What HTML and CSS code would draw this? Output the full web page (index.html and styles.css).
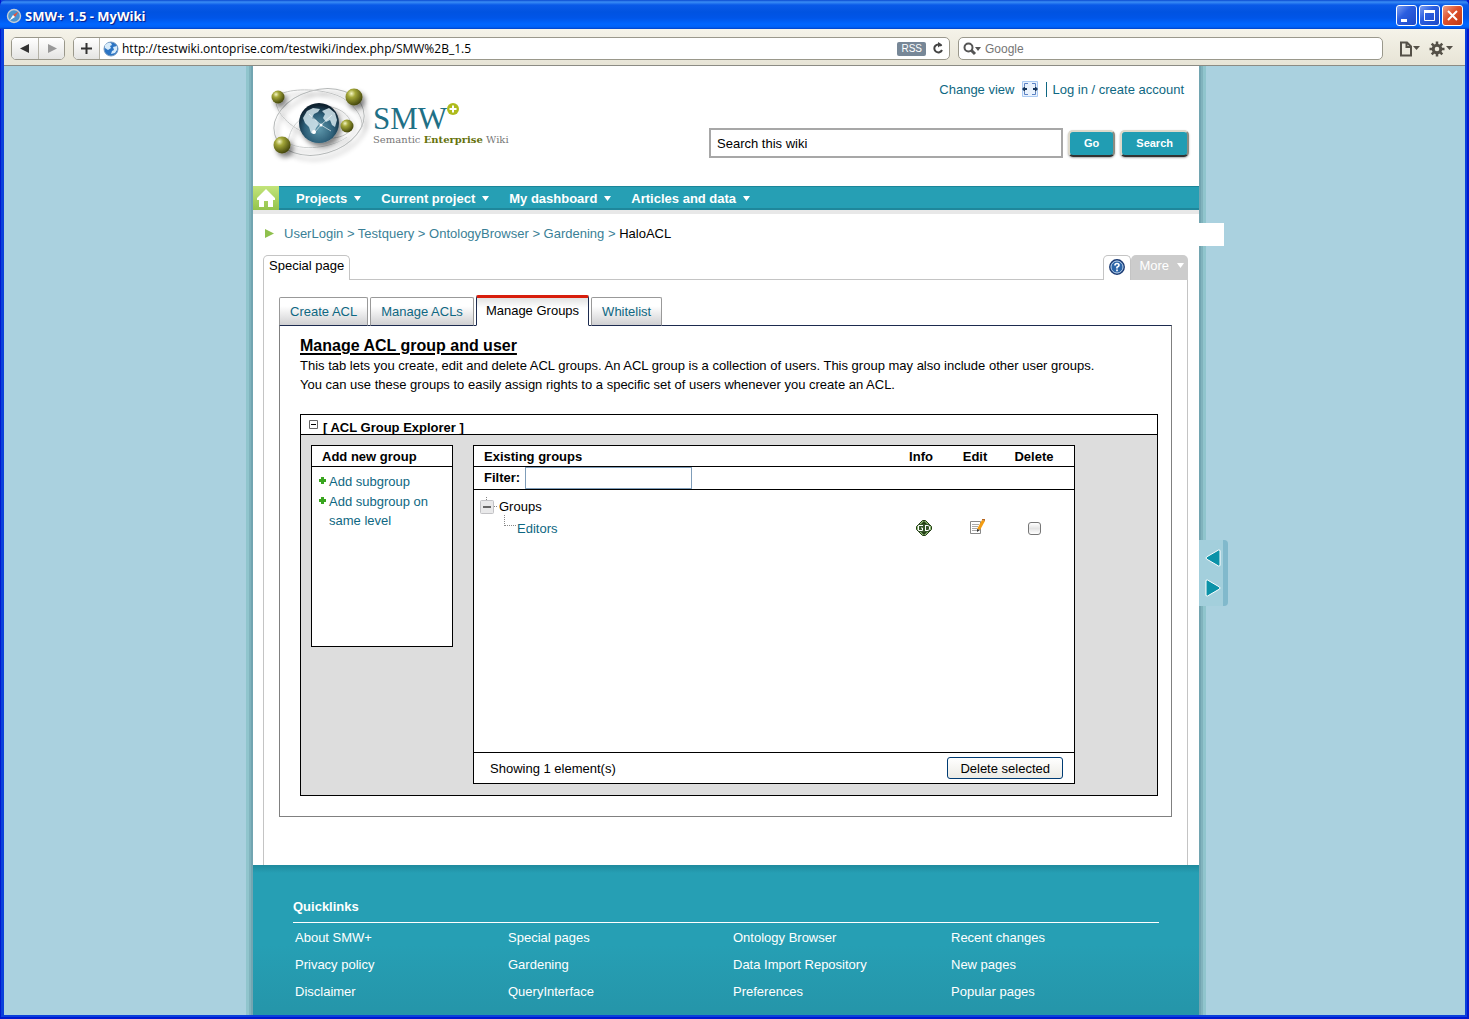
FILE: index.html
```
<!DOCTYPE html>
<html lang="en">
<head>
    <meta charset="UTF-8">
    <meta name="viewport" content="width=device-width, initial-scale=1.0">
    <title>SMW+ 1.5 - MyWiki</title>
    <link rel="stylesheet" href="styles.css">
</head>
<body>
    <div class="window">
        <div class="titlebar">
            <svg width="16" height="16" viewBox="0 0 16 16">
                <circle cx="8" cy="8" r="6.5" fill="#4a93cf" stroke="#c4cdd6" stroke-width="1.4"/>
                <path d="M12.500 3.500L9 9L7 7z" fill="#e6553c"/>
                <path d="M3.500 12.500L7 7L9 9z" fill="#fff"/>
            </svg>
            <span class="window-title">SMW+ 1.5 - MyWiki</span>
            <button class="win-btn" aria-label="Minimize"><svg width="19" height="19"><path d="M4 13h6v3H4z" fill="#fff"/></svg></button>
            <button class="win-btn" aria-label="Maximize"><svg width="19" height="19"><path d="M4.500 5v9.500h10V5" fill="none" stroke="#fff"/><path d="M4 4h11v3H4z" fill="#fff"/></svg></button>
            <button class="win-btn close" aria-label="Close"><svg width="19" height="19"><path d="M5 5l9 9M14 5l-9 9" stroke="#fff" stroke-width="2"/></svg></button>
        </div>
        <div class="toolbar">
            <div class="history">
                <button aria-label="Back"><svg width="10" height="10"><path d="M9 0v9L0 4.500z" fill="#333"/></svg></button>
                <button aria-label="Forward"><svg width="10" height="10"><path d="M1 0v9l9-4.500z" fill="#999"/></svg></button>
            </div>
            <div class="address">
                <button class="add-bookmark" aria-label="Add bookmark"><svg width="11" height="11"><path d="M4.500 0h2v4.500H11v2H6.500V11h-2V6.500H0v-2h4.500z" fill="#333"/></svg></button>
                <svg width="16" height="16" viewBox="0 0 16 16">
                    <circle cx="8" cy="8" r="7" fill="#2b74c4" stroke="#7a9cc0"/>
                    <path d="M2 4Q5 1 8 2L9 4L7 5L8 7L5 9L2 7zM10 6L14 5L14 9L12 12L8 13L9 10L11 9z" fill="#d8ecfb"/>
                </svg>
                <input type="text" class="url" aria-label="Address" value="http://testwiki.ontoprise.com/testwiki/index.php/SMW%2B_1.5">
                <span class="rss">RSS</span>
                <button class="plain" aria-label="Reload"><svg width="12" height="13"><path d="M9.500 4A4 4 0 1 0 10 8" fill="none" stroke="#444" stroke-width="2"/><path d="M6 0l4 2.500L6 5.500z" fill="#444"/></svg></button>
            </div>
            <div class="google">
                <svg width="19" height="14"><circle cx="5.500" cy="5.500" r="4" fill="none" stroke="#555" stroke-width="2"/><path d="M8 8l4 4" stroke="#555" stroke-width="3"/><path d="M12 5h6l-3 4z" fill="#555"/></svg>
                <input type="text" aria-label="Google search" placeholder="Google">
            </div>
            <button class="plain menu-btn" aria-label="Page menu"><svg width="22" height="16"><path d="M2 1.500h6l4 4v9H2zM7.500 1.500V6H12" fill="none" stroke="#555148" stroke-width="2"/><path d="M14 5h7l-3.500 4z" fill="#555148"/></svg></button>
            <button class="plain menu-btn" aria-label="Settings menu"><svg width="25" height="16"><circle cx="8" cy="8" r="3.800" fill="none" stroke="#555148" stroke-width="3"/><path d="M8 .5v3M8 12.500v3M.5 8h3M12.500 8h3M2.700 2.700l2 2M11.300 11.300l2 2M2.700 13.300l2-2M11.300 4.700l2-2" stroke="#555148" stroke-width="2.500"/><path d="M17 5h7l-3.500 4z" fill="#555148"/></svg></button>
        </div>

        <div class="viewport">
            <div class="page">
                <header class="header">
                    <a href="#" class="logo" aria-label="SMW+ home">
                        <svg width="102" height="88" viewBox="0 -2 102 88">
                            <defs>
                                <radialGradient id="ball" cx="35%" cy="30%" r="75%">
                                    <stop offset="0" stop-color="#f4f5c4"/>
                                    <stop offset=".3" stop-color="#a5a83a"/>
                                    <stop offset="1" stop-color="#3c3f08"/>
                                </radialGradient>
                                <radialGradient id="globe" cx="50%" cy="65%" r="60%">
                                    <stop offset="0" stop-color="#5f98ac"/>
                                    <stop offset=".6" stop-color="#2d5f78"/>
                                    <stop offset="1" stop-color="#0e202e"/>
                                </radialGradient>
                                <filter id="shade" x="-30%" y="-30%" width="160%" height="160%">
                                    <feDropShadow dx="3" dy="4" stdDeviation="2.500" flood-color="#000" flood-opacity=".45"/>
                                </filter>
                            </defs>
                            <g fill="none" filter="url(#shade)">
                                <ellipse cx="48" cy="39" rx="46" ry="32" stroke="#b5b8b8" transform="rotate(-16 48 39)"/>
                                <path d="M5 20C-1 6 44 2 70 14C84 22 92 34 91 44" stroke="#c2c4c4"/>
                                <path d="M5 20C8 36 26 48 44 54C58 58 84 54 80 40C78 32 70 26 60 24" stroke="#c2c4c4"/>
                                <path d="M17 60C18 50 22 42 30 36M17 60C36 70 66 62 76 54" stroke="#cfd1d1"/>
                            </g>
                            <g filter="url(#shade)">
                                <circle cx="48" cy="40" r="20" fill="url(#globe)"/>
                                <circle cx="7" cy="14" r="6.500" fill="url(#ball)"/>
                                <circle cx="83" cy="14" r="8.500" fill="url(#ball)"/>
                                <circle cx="11" cy="62" r="8.500" fill="url(#ball)"/>
                            </g>
                            <g transform="translate(0 1)">
                                <path d="M32 34L36 27L42 24L49 25L47 28L43 30L41 34L45 36L48 40L45 44L43 50L40 49L38 43L34 39zM51 27L58 24L64 29L66 36L64 43L61 41L59 36L55 38L52 34L54 30z" fill="#d5e8ee" opacity=".85"/>
                                <path d="M38 30L50 41L61 31M50 41L43 49M50 41L60 47" stroke="#fff" fill="none" opacity=".6"/>
                                <circle cx="50" cy="41" r="1.500" fill="#fff"/>
                                <circle cx="43" cy="48" r="2" fill="#fff"/>
                            </g>
                            <circle cx="76" cy="43" r="6.500" fill="url(#ball)"/>
                        </svg>
                        <span class="logo-text">
                            <span class="logo-name">SMW<svg width="12" height="12" class="logo-plus"><circle cx="6" cy="6" r="6" fill="#aebb1c"/><path d="M6 2.500v7M2.500 6h7" stroke="#fff" stroke-width="2"/></svg></span>
                            <span class="logo-sub">Semantic <b>Enterprise</b> Wiki</span>
                        </span>
                    </a>
                    <div class="header-right">
                        <div class="user-links">
                            <a href="#">Change view</a>
                            <svg width="16" height="16"><path d="M.5.500h15v15H.5z" fill="#e9f2fd" stroke="#a9c9f2"/><path d="M2.500 5V2.500H6M10 2.500h3.500V5M2.500 11v2.500H6M10 13.500h3.500V11" fill="none" stroke="#5b82c4"/><path d="M0 8l3-3v2h2v2H3v2zM16 8l-3-3v2h-2v2h2v2z" fill="#17365d"/></svg>
                            <a href="#" class="login">Log in / create account</a>
                        </div>
                        <form class="wiki-search">
                            <input type="text" aria-label="Search this wiki" value="Search this wiki">
                            <button type="button">Go</button>
                            <button type="button">Search</button>
                        </form>
                    </div>
                </header>
                <nav class="main-nav">
                    <a href="#" class="home" aria-label="Home"><svg width="20" height="19"><path d="M10 0L19 9V11H17V18H12V12H8V18H3V11H1V9z" fill="#fff"/></svg></a>
                    <button>Projects <svg width="7" height="5"><path d="M0 0h7L3.500 5z"/></svg></button>
                    <button>Current project <svg width="7" height="5"><path d="M0 0h7L3.500 5z"/></svg></button>
                    <button>My dashboard <svg width="7" height="5"><path d="M0 0h7L3.500 5z"/></svg></button>
                    <button>Articles and data <svg width="7" height="5"><path d="M0 0h7L3.500 5z"/></svg></button>
                </nav>
                <div class="breadcrumb">
                    <svg width="9" height="9"><path d="M0 0l9 4.500L0 9z" fill="#8fc04d"/></svg>
                    <span><a href="#">UserLogin</a> &gt; <a href="#">Testquery</a> &gt; <a href="#">OntologyBrowser</a> &gt; <a href="#">Gardening</a> &gt; <span class="current">HaloACL</span></span>
                </div>
                <div class="page-tabs">
                    <a href="#" class="page-tab">Special page</a>
                    <a href="#" class="help-tab" aria-label="Help"><svg width="16" height="16"><circle cx="8" cy="8" r="7.200" fill="#2c65a8" stroke="#1b3a72" stroke-width="1.500"/><circle cx="8" cy="8" r="6" fill="none" stroke="#b9cfe8"/><path d="M6 6.500Q6 4.500 8 4.500T10 6.300Q10 7.300 8 8.300V9.500M8 10.500v1.800" fill="none" stroke="#fff" stroke-width="1.700"/></svg></a>
                    <button class="more-tab">More <svg width="7" height="5"><path d="M0 0h7L3.500 5z"/></svg></button>
                </div>
                <main class="content">
                    <div class="acl-tabs">
                        <a href="#">Create ACL</a>
                        <a href="#">Manage ACLs</a>
                        <a href="#" class="active">Manage Groups</a>
                        <a href="#">Whitelist</a>
                    </div>
                    <div class="acl-panel">
                        <h1>Manage ACL group and user</h1>
                        <p>This tab lets you create, edit and delete ACL groups. An ACL group is a collection of users. This group may also include other user groups.<br>
                        You can use these groups to easily assign rights to a specific set of users whenever you create an ACL.</p>
                        <div class="explorer">
                            <div class="explorer-head">
                                <svg width="9" height="9"><path d="M.5.500h8v8h-8z" fill="#fff" stroke="#666"/><path d="M2 4.500h5" stroke="#000"/></svg>
                                <span>[ ACL Group Explorer ]</span>
                            </div>
                            <div class="explorer-body">
                                <div class="add-box">
                                    <h2>Add new group</h2>
                                    <a href="#"><svg width="7" height="7"><path d="M2 0h3v2h2v3H5v2H2V5H0V2h2z" fill="#39a51f"/></svg>Add subgroup</a>
                                    <a href="#"><svg width="7" height="7"><path d="M2 0h3v2h2v3H5v2H2V5H0V2h2z" fill="#39a51f"/></svg>Add subgroup on same level</a>
                                </div>
                                <div class="group-box">
                                    <div class="group-list">
                                        <table>
                                            <thead>
                                                <tr class="line">
                                                    <th class="name">Existing groups</th>
                                                    <th class="icon-col">Info</th>
                                                    <th class="icon-col">Edit</th>
                                                    <th class="delete-col">Delete</th>
                                                </tr>
                                                <tr class="line filter">
                                                    <td colspan="4"><div class="filter-row"><label for="filter">Filter:</label><input type="text" id="filter"></div></td>
                                                </tr>
                                            </thead>
                                            <tbody>
                                                <tr class="spacer"><td colspan="4"></td></tr>
                                                <tr>
                                                    <td class="tree" colspan="4"><div class="node"><svg width="18" height="18"><path d="M7.500 0v3M15 9.500h3" stroke="#888" stroke-dasharray="1 1"/><rect x="1.500" y="3.500" width="13" height="13" rx="1" fill="#e9e9ea" stroke="#c2c2c5"/><path d="M4 10h8" stroke="#666" stroke-width="2"/></svg>Groups</div></td>
                                                </tr>
                                                <tr>
                                                    <td class="tree"><div class="node child"><svg width="12" height="22"><path d="M.5 0v11M1 10.500h11" stroke="#888" stroke-dasharray="1 1"/></svg><a href="#">Editors</a></div></td>
                                                    <td class="icon-col row-icon"><a href="#" aria-label="Info"><svg width="16" height="16"><path d="M6.500.500h3l6 6v3l-6 6h-3l-6-6v-3z" fill="#8fb878" stroke="#243e15"/><path d="M8 1l3 3H5zM8 15l3-3H5z" fill="#243e15"/><path d="M2 4h12v8H2z" fill="#35552a"/><path d="M7 5.500H2.500v5H6.500V8H5M9.500 5v6M9 5.500h3l1.500 1v3l-1.500 1h-3" fill="none" stroke="#fff"/></svg></a></td>
                                                    <td class="icon-col row-icon"><a href="#" aria-label="Edit"><svg width="16" height="18"><path d="M.5 2.500h10v12H.5z" fill="#fff" stroke="#888"/><path d="M2 5.500h7M2 7.500h6M2 9.500h5M2 11.500h5" stroke="#aaa"/><path d="M12 1l3 1-5 9-3-1z" fill="#f39c12"/><path d="M7 10l3 1-3 2z" fill="#333"/><path d="M12 0h3v2l-3-1z" fill="#b5651d"/></svg></a></td>
                                                    <td class="delete-col"><input type="checkbox" aria-label="Delete Editors"></td>
                                                </tr>
                                            </tbody>
                                        </table>
                                    </div>
                                    <div class="group-foot">
                                        <span>Showing 1 element(s)</span>
                                        <button>Delete selected</button>
                                    </div>
                                </div>
                            </div>
                        </div>
                    </div>
                </main>
                <footer class="footer">
                    <h3>Quicklinks</h3>
                    <div class="quicklinks">
                        <a href="#">About SMW+</a>
                        <a href="#">Special pages</a>
                        <a href="#">Ontology Browser</a>
                        <a href="#">Recent changes</a>
                        <a href="#">Privacy policy</a>
                        <a href="#">Gardening</a>
                        <a href="#">Data Import Repository</a>
                        <a href="#">New pages</a>
                        <a href="#">Disclaimer</a>
                        <a href="#">QueryInterface</a>
                        <a href="#">Preferences</a>
                        <a href="#">Popular pages</a>
                    </div>
                </footer>
                <div class="side-toggle">
                    <button aria-label="Narrower"><svg width="16" height="18"><path d="M13.500 1Q15 .5 15 2V16Q15 17.500 13.500 17L1.500 10Q.5 9 1.500 8z" fill="#0b92a8" stroke="#fff"/></svg></button>
                    <button aria-label="Wider"><svg width="16" height="18"><path d="M2.500 1Q1 .5 1 2V16Q1 17.500 2.500 17L14.500 10Q15.500 9 14.500 8z" fill="#0b92a8" stroke="#fff"/></svg></button>
                </div>
            </div>
        </div>
    </div>
</body>
</html>
```
FILE: styles.css
```
* {
    box-sizing: border-box;
}
body {
    margin: 0;
    font-family: "Liberation Sans", Arial, sans-serif;
    font-size: 13px;
    color: #000;
}
a {
    color: #0e6782;
    text-decoration: none;
}
svg {
    display: block;
    flex-shrink: 0;
}
button, input {
    font-family: inherit;
    font-size: 13px;
    margin: 0;
}
button {
    cursor: pointer;
}
h1, h2, h3, p {
    margin: 0;
}
.window {
    min-height: 100vh;
    display: flex;
    flex-direction: column;
    background: #0a40dc;
    border: solid #0019cf;
    border-width: 0 2px 2px 1px;
    padding: 0 2px 2px 3px;
}
/* window frame */
.titlebar {
    height: 29px;
    margin: 0 -4px;
    padding: 2px 6px 0 6px;
    display: flex;
    align-items: center;
    gap: 2px;
    background: linear-gradient(#0a49d0 0, #3a8df5 2px, #0a5ae8 5px, #0053e1 12px, #0055e8 18px, #0066ff 24px, #0062f8 27px, #0042c8 29px);
    border-radius: 6px 6px 0 0;
}
.window-title {
    flex-grow: 1;
    padding-left: 1px;
    font-family: "Open Sans", sans-serif;
    font-weight: bold;
    color: #fff;
    text-shadow: 1px 1px 1px #0a1883;
}
.win-btn {
    width: 21px;
    height: 21px;
    padding: 0;
    border: 1px solid #fff;
    border-radius: 3px;
    background: linear-gradient(135deg, #7d9ff2, #2b5ee0 40%, #1d49c6);
}
.win-btn.close {
    background: linear-gradient(135deg, #f0a088, #dd4f2a 45%, #c03a14);
}
.toolbar {
    height: 37px;
    padding: 3px 11px 0 7px;
    display: flex;
    align-items: center;
    gap: 8px;
    background: linear-gradient(#f5f3e9, #e7e4d6);
    border-bottom: 1px solid #8b8b84;
}
.history, .address, .google {
    height: 23px;
    display: flex;
    align-items: center;
    border: 1px solid #9a988b;
    border-radius: 5px;
    background: #fff;
    overflow: hidden;
}
.history button, .add-bookmark {
    width: 26px;
    height: 21px;
    padding: 0;
    border: none;
    display: flex;
    align-items: center;
    justify-content: center;
    background: linear-gradient(#fff, #e4e4e2);
}
.history button + button, .add-bookmark {
    border-right: 1px solid #b5b3a8;
}
.history button + button {
    border-right: none;
    border-left: 1px solid #b5b3a8;
}
.address {
    flex: 1 1 0;
    padding-right: 5px;
    gap: 3px;
}
.address input, .google input {
    flex-grow: 1;
    min-width: 0;
    padding: 0;
    border: none;
    outline: none;
    background: none;
}
.url {
    font-family: "Open Sans", sans-serif;
    font-size: 12px;
}
.google {
    flex: 0 1 425px;
    padding: 0 4px;
    gap: 3px;
    margin-right: 8px;
}
.google input {
    font-size: 12px;
}
.rss {
    padding: 0 4px;
    font-size: 10px;
    line-height: 14px;
    color: #fff;
    background: #778797;
    border-radius: 2px;
}
.plain {
    padding: 0;
    border: none;
    background: none;
}
.address .plain {
    margin-left: 3px;
}
.viewport {
    flex-grow: 1;
    display: flex;
    justify-content: center;
    padding-right: 17px;
    background: #aad1df;
}
.page {
    position: relative;
    width: 100%;
    max-width: 946px;
    display: flex;
    flex-direction: column;
    background: #fff;
    box-shadow: -2px 0 #72a5b1, 2px 0 #72a5b1, -4px 0 #80b3bd, 4px 0 #80b3bd, -7px 0 #90c5cd, 7px 0 #90c5cd;
    clip-path: inset(0 -30px);
}
.header {
    height: 120px;
    padding: 15px 10px 0 18px;
    display: flex;
    justify-content: space-between;
}
.logo {
    display: flex;
}
.logo-text {
    display: flex;
    flex-direction: column;
    padding-top: 22px;
}
.logo-name {
    display: flex;
    font-family: "Liberation Serif", serif;
    font-size: 31px;
    line-height: 32px;
    color: #1f7086;
}
.logo-sub {
    font-family: "DejaVu Serif", serif;
    font-size: 10px;
    line-height: 10px;
    color: #777;
}
.logo-sub b {
    color: #66720c;
}
.header-right {
    display: flex;
    flex-direction: column;
    align-items: flex-end;
    gap: 31px;
}
.user-links {
    display: flex;
    align-items: center;
    gap: 8px;
    padding-right: 5px;
}
.login {
    padding-left: 5px;
    border-left: 1px solid #0e6782;
}
.wiki-search {
    display: flex;
    align-items: center;
    gap: 5px;
}
.wiki-search input {
    width: 354px;
    height: 30px;
    padding: 0 6px;
    border: 2px solid #a7a7a7;
}
.wiki-search button {
    height: 27px;
    padding: 0 14px;
    font-size: 11px;
    font-weight: bold;
    color: #fff;
    background: #219db3;
    border: 2px solid;
    border-color: #ddd9cb #8d8b80 #333 #ddd9cb;
    border-radius: 5px;
    box-shadow: 0 1px 2px #aaa;
}
.main-nav {
    height: 24px;
    display: flex;
    background: #269fb4;
    border-top: 1px solid #1b8599;
    border-bottom: 2px solid #1f879b;
    box-shadow: 0 4px #e8e8e8;
}
.home {
    width: 26px;
    margin: -1px 8px -2px 0;
    padding: 3px;
    background: linear-gradient(#c3e47a, #94c44c);
}
.main-nav button {
    display: flex;
    align-items: center;
    gap: 7px;
    padding: 1px 11px 0 9px;
    border: none;
    background: none;
    color: #fff;
    font-weight: bold;
}
.main-nav button svg, .more-tab svg {
    fill: #fff;
}
.breadcrumb {
    height: 23px;
    margin: 13px -25px 0 0;
    padding: 0 12px 2px;
    display: flex;
    align-items: center;
    gap: 10px;
    background: #fff;
    color: #3a7f96;
}
.breadcrumb a {
    color: #3a7f96;
}
.breadcrumb .current {
    color: #000;
}
.page-tabs {
    height: 25px;
    margin: 9px 11px -1px 10px;
    display: flex;
    z-index: 1;
}
.page-tab, .help-tab {
    border: 1px solid #c4c4c4;
    border-bottom: none;
    border-radius: 5px 5px 0 0;
    background: #fff;
}
.page-tab {
    margin-right: auto;
    padding: 2px 5px;
    color: #000;
}
.help-tab {
    padding: 3px 5px;
}
.more-tab {
    display: flex;
    align-items: center;
    gap: 8px;
    padding: 0 4px 4px 8px;
    border: none;
    border-radius: 5px 5px 0 0;
    background: #ccc;
    color: #fff;
}
.content {
    margin: 0 11px 0 10px;
    padding: 15px 15px 48px;
    border: 1px solid #c4c4c4;
    border-bottom: none;
}
.acl-tabs {
    display: flex;
    align-items: flex-end;
    gap: 2px;
    margin-bottom: -1px;
}
.acl-tabs a {
    height: 29px;
    padding: 6px 10px 0;
    border: 1px solid #999;
    border-bottom-color: #1d2b4f;
    border-radius: 2px 2px 0 0;
    background: linear-gradient(#fff 30%, #d0d0d2);
}
.acl-tabs .active {
    height: 31px;
    padding: 5px 9px 0;
    border: 1px solid #1d2b4f;
    border-top: 3px solid #d81e0c;
    border-bottom-color: #fff;
    background: linear-gradient(#e2e2e2, #fff 10px);
    color: #000;
}
.acl-panel {
    padding: 9px 13px 20px 20px;
    border: 1px solid #808080;
    border-top-color: #1d2b4f;
}
.acl-panel h1 {
    font-size: 16px;
    line-height: 21px;
    text-decoration: underline;
    text-decoration-thickness: 2px;
    text-underline-offset: 2px;
}
.acl-panel p {
    line-height: 19px;
}
.explorer {
    margin-top: 20px;
    border: 1px solid #000;
}
.explorer-head {
    height: 20px;
    padding: 5px 8px 0;
    display: flex;
    gap: 5px;
    border-bottom: 1px solid #000;
    font-weight: bold;
}
.explorer-body {
    display: flex;
    align-items: flex-start;
    gap: 20px;
    padding: 10px 82px 11px 10px;
    background: #ddd;
}
.add-box {
    width: 142px;
    min-height: 202px;
    display: flex;
    flex-direction: column;
    background: #fff;
    border: 1px solid #000;
}
.add-box h2 {
    margin-bottom: 5px;
    padding: 1px 0 0 10px;
    font-size: 13px;
    line-height: 19px;
    border-bottom: 1px solid #000;
}
.add-box a {
    display: flex;
    gap: 3px;
    padding: 0 10px 0 7px;
    line-height: 19px;
}
.add-box a + a {
    margin-top: 1px;
}
.add-box a svg {
    margin-top: 5px;
}
.group-box {
    flex-grow: 1;
    background: #fff;
    border: 1px solid #000;
}
.group-list {
    min-height: 306px;
}
table {
    width: 100%;
    border-collapse: collapse;
}
th, td {
    padding: 0;
    text-align: left;
}
.line {
    height: 20px;
    border-bottom: 1px solid #000;
}
.line th {
    padding-top: 1px;
}
.filter {
    height: 23px;
}
.name {
    padding-left: 10px;
}
.filter-row {
    display: flex;
    align-items: center;
    gap: 5px;
    padding-left: 10px;
    font-weight: bold;
}
.filter-row input {
    width: 167px;
    height: 22px;
    border: 1px solid #7f9db9;
}
.icon-col {
    width: 54px;
    text-align: center;
}
.delete-col {
    width: 72px;
    padding-right: 8px;
    text-align: center;
}
.row-icon {
    padding-left: 5px;
}
.icon-col svg {
    margin: 0 auto;
}
.delete-col input {
    display: block;
    appearance: none;
    width: 13px;
    height: 13px;
    margin: 0 auto;
    border: 1px solid #777;
    border-radius: 3px;
    background: linear-gradient(#fff, #e4e4e4 50%, #fff);
}
.spacer {
    height: 6px;
}
.node {
    height: 22px;
    display: flex;
    align-items: center;
    gap: 2px;
    padding-left: 5px;
}
.child {
    gap: 1px;
    padding-left: 30px;
}
.child svg {
    margin-top: -5px;
}
.group-foot {
    display: flex;
    align-items: center;
    justify-content: space-between;
    padding: 4px 11px 4px 16px;
    border-top: 1px solid #000;
}
.group-foot button {
    height: 22px;
    padding: 0 12px;
    border: 1px solid #003c74;
    border-radius: 3px;
    background: linear-gradient(#fff, #ecebe5);
}
.footer {
    flex-grow: 1;
    padding: 32px 40px 10px;
    color: #fff;
    background: linear-gradient(#1f8a9d, #269fb4 8px, #269fb4 80px, #2595a9);
}
.footer h3 {
    padding-bottom: 6px;
    font-size: 13px;
    line-height: 19px;
    border-bottom: 1px solid #fff;
}
.quicklinks {
    display: grid;
    grid-template-columns: 213fr 225fr 218fr 208fr;
    padding: 1px 0 0 2px;
    line-height: 27px;
}
.quicklinks a {
    color: #fff;
}
/* drawer handle on the right page edge */
.side-toggle {
    position: absolute;
    top: 474px;
    left: 100%;
    width: 29px;
    height: 66px;
    padding-left: 6px;
    display: flex;
    flex-direction: column;
    justify-content: center;
    gap: 12px;
    background: #a3cfdc;
    border-right: 5px solid #81b9cc;
    border-radius: 0 4px 4px 0;
}
.side-toggle button {
    padding: 0;
    border: none;
    background: none;
}
```
